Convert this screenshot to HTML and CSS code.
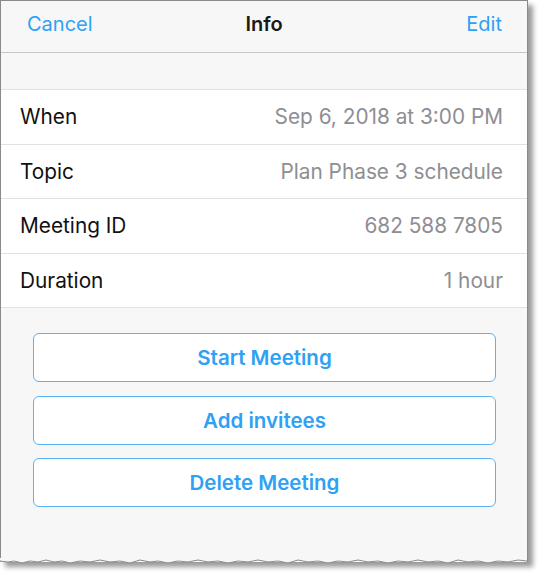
FILE: index.html
```html
<!DOCTYPE html>
<html>
<head>
<meta charset="utf-8">
<link rel="stylesheet" href="styles.css">
</head>
<body>
<div class="frame">
  <div class="navbar">
    <span class="nav-btn">Cancel</span>
    <span class="nav-title">Info</span>
    <span class="nav-btn">Edit</span>
  </div>
  <div class="gap"></div>
  <div class="list">
    <div class="row"><span class="label">When</span><span class="value">Sep 6, 2018 at 3:00 PM</span></div>
    <div class="row"><span class="label">Topic</span><span class="value">Plan Phase 3 schedule</span></div>
    <div class="row"><span class="label">Meeting ID</span><span class="value">682 588 7805</span></div>
    <div class="row"><span class="label">Duration</span><span class="value">1 hour</span></div>
  </div>
  <div class="actions">
    <div class="btn">Start Meeting</div>
    <div class="btn">Add invitees</div>
    <div class="btn">Delete Meeting</div>
  </div>
  <svg class="torn" width="527" height="8" viewBox="0 0 527 8" preserveAspectRatio="none">
    <path d="M0 0 L0 3 L8 4 L14 3 L22 5 L30 3 L38 4 L46 2 L54 4 L62 3 L70 5 L80 3 L90 4 L100 2 L110 4 L120 3 L130 5 L140 2 L150 4 L158 3 L168 5 L178 3 L188 4 L198 2 L208 4 L218 3 L228 5 L238 3 L248 4 L258 2 L268 4 L278 3 L288 5 L298 2 L308 4 L318 3 L328 5 L338 3 L348 4 L358 2 L368 4 L378 3 L388 5 L398 3 L408 4 L418 2 L428 4 L438 3 L448 5 L458 2 L468 4 L478 3 L488 5 L498 3 L508 4 L518 2 L527 3 L527 0 Z" fill="#f7f7f7"/>
    <path d="M0 3 L8 4 L14 3 L22 5 L30 3 L38 4 L46 2 L54 4 L62 3 L70 5 L80 3 L90 4 L100 2 L110 4 L120 3 L130 5 L140 2 L150 4 L158 3 L168 5 L178 3 L188 4 L198 2 L208 4 L218 3 L228 5 L238 3 L248 4 L258 2 L268 4 L278 3 L288 5 L298 2 L308 4 L318 3 L328 5 L338 3 L348 4 L358 2 L368 4 L378 3 L388 5 L398 3 L408 4 L418 2 L428 4 L438 3 L448 5 L458 2 L468 4 L478 3 L488 5 L498 3 L508 4 L518 2 L527 3" fill="none" stroke="#8a8a8a" stroke-width="1"/>
  </svg>
</div>
</body>
</html>
```
FILE: styles.css
```css
html, body {
  margin: 0;
  padding: 0;
  background: #ffffff;
}
body {
  font-family: "Inter", "Liberation Sans", sans-serif;
  width: 550px;
  height: 588px;
  overflow: hidden;
}
.frame {
  position: relative;
  width: 526px;
  height: 561px;
  background: #f7f7f7;
  border-left: 1px solid #8a8a8a;
  border-top: 1px solid #8a8a8a;
  border-right: 1px solid #8a8a8a;
  box-shadow: 5px 5px 5px rgba(0, 0, 0, 0.4);
  display: flex;
  flex-direction: column;
}
.navbar {
  height: 52px;
  box-sizing: border-box;
  padding: 0 25px 5px 26px;
  border-bottom: 1px solid #c8c8cc;
  background: #f7f7f7;
  display: flex;
  align-items: center;
  justify-content: space-between;
  position: relative;
}
.nav-btn {
  color: #2ea1f4;
  font-size: 20px;
}
.nav-title {
  position: absolute;
  left: 0;
  right: 0;
  text-align: center;
  font-weight: 600;
  font-size: 20px;
  color: #1a1a1a;
  pointer-events: none;
}
.gap {
  height: 36px;
  border-bottom: 1px solid #e2e2e4;
}
.list {
  background: #ffffff;
}
.row {
  height: 53.5px;
  border-bottom: 1px solid #e2e2e4;
  display: flex;
  align-items: center;
  justify-content: space-between;
  padding: 0 24px 0 19px;
  font-size: 20.8px;
}
.label {
  color: #111111;
}
.value {
  color: #8e8e93;
}
.actions {
  flex: 1;
  display: flex;
  flex-direction: column;
  gap: 13.5px;
  padding: 25px 31px 0 32px;
}
.btn {
  height: 49px;
  box-sizing: border-box;
  border: 1px solid #5ab4f4;
  border-radius: 6px;
  background: #ffffff;
  color: #2ea1f4;
  font-size: 20.5px;
  font-weight: 600;
  display: flex;
  align-items: center;
  justify-content: center;
}
.torn {
  position: absolute;
  left: -1px;
  bottom: -4px;
}
```
